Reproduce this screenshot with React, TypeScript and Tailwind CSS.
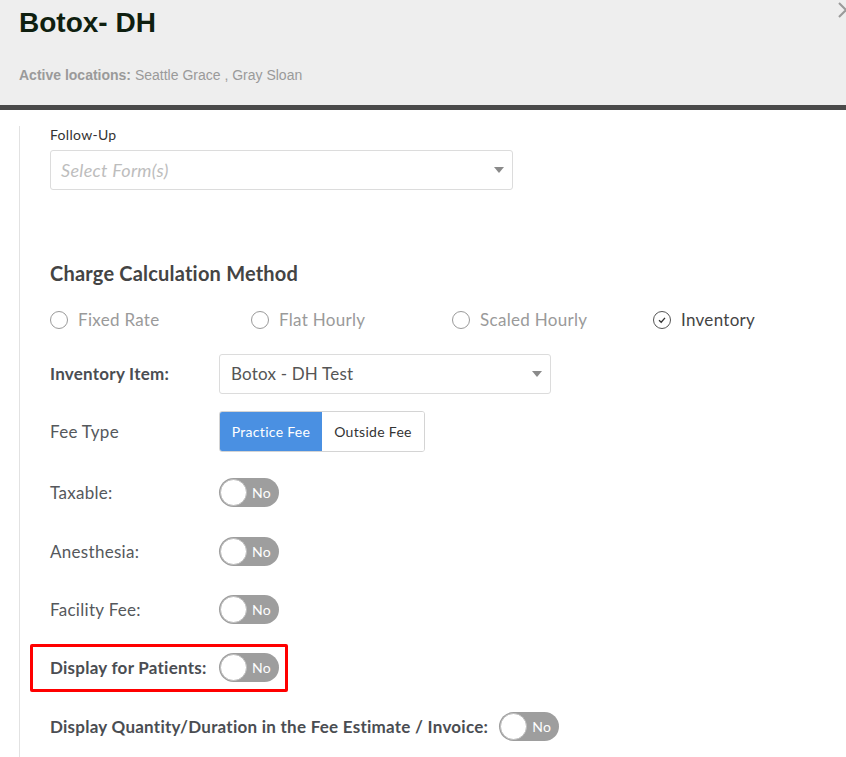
import React from "react";

// Small "No" switch used on every fee flag row
const Toggle = () => {
    return (
        <div className="relative flex items-center w-[60px] h-[29px] rounded-full bg-[#9e9e9e] shrink-0">
            <div className="absolute left-[1px] top-[1px] w-[27px] h-[27px] rounded-full bg-white border border-[#bdbdbd]"/>
            <span className="ml-auto mr-[8px] text-[14px] tracking-[0.3px] text-white">No</span>
        </div>
    );
};

const Caret = () => (
    <svg width="10" height="6" viewBox="0 0 10 6" className="shrink-0">
        <path d="M0 0 L10 0 L5 6 Z" fill="#8a8a8a"/>
    </svg>
);

type RadioProps = {
    label: string;
    checked?: boolean;
};

const Radio = ({label, checked}: RadioProps) => {
    return (
        <div className="flex items-center gap-[10px] w-[201px] shrink-0">
            <div
                className={`w-[18px] h-[18px] rounded-full border flex items-center justify-center ${checked ? "border-[#555]" : "border-[#9a9a9a]"}`}>
                {checked && (
                    <svg width="10" height="10" viewBox="0 0 10 10">
                        <path d="M2 5.2 L4.2 7.2 L8 2.8" stroke="#333" strokeWidth="1.3" fill="none"/>
                    </svg>
                )}
            </div>
            <span className={`text-[17px] tracking-[0.3px] ${checked ? "text-[#444]" : "text-[#9a9a9a]"}`}>{label}</span>
        </div>
    );
};

type FlagRowProps = {
    label: string;
    bold?: boolean;
    className?: string;
};

const FlagRow = ({label, bold, className}: FlagRowProps) => {
    return (
        <div className={`flex items-center ${className ?? ""}`}>
            <span
                className={`min-w-[158px] mr-[11px] text-[17px] ${bold ? "font-bold tracking-[0.25px] text-[#4a4d52]" : "tracking-[0.3px] text-[#55585c]"}`}>
                {label}
            </span>
            <Toggle/>
        </div>
    );
};

export default function App() {
    return (
        <div className="relative w-[846px] h-[757px] bg-white overflow-hidden font-['Lato',sans-serif]">
            {/* header */}
            <div className="h-[110px] bg-[#eeeeee] border-b-[5px] border-[#4a4a4a] px-[19px] pt-[5px]">
                <h1 className="text-[28px] leading-[36px] font-bold text-[#0f1f10] font-['Liberation_Sans',sans-serif]">
                    Botox- DH
                </h1>
                <p className="mt-[24px] text-[14px] text-[#9a9a9a] font-['Liberation_Sans',sans-serif]">
                    <span className="font-bold">Active locations:</span> Seattle Grace , Gray Sloan
                </p>
            </div>
            <svg width="16" height="16" viewBox="0 0 16 16" className="absolute left-[838px] top-[2px]">
                <path d="M1 1 L15 15 M15 1 L1 15" stroke="#9a9a9a" strokeWidth="2"/>
            </svg>

            {/* body */}
            <div className="ml-[19px] mt-[16px] h-[700px] border-l border-[#e2e2e2] pl-[30px]">
                <div className="text-[14px] leading-[16px] tracking-[0.3px] text-[#333] pt-[1px]">Follow-Up</div>
                <div
                    className="mt-[7px] w-[463px] h-[40px] border border-[#dcdcdc] rounded-[3px] flex items-center pl-[10px] pr-[8px]">
                    <span className="flex-1 italic text-[18px] tracking-[0.3px] text-[#bdbdbd]">Select Form(s)</span>
                    <Caret/>
                </div>

                <h2 className="mt-[71px] text-[20px] leading-[24px] tracking-[0.2px] font-bold text-[#444]">
                    Charge Calculation Method
                </h2>

                <div className="mt-[23px] flex items-center h-[24px]">
                    <Radio label="Fixed Rate"/>
                    <Radio label="Flat Hourly"/>
                    <Radio label="Scaled Hourly"/>
                    <Radio label="Inventory" checked/>
                </div>

                <div className="mt-[22px] flex items-center">
                    <span className="w-[169px] text-[17px] tracking-[0.25px] font-bold text-[#4a4d52]">Inventory Item:</span>
                    <div
                        className="w-[332px] h-[40px] border border-[#dcdcdc] rounded-[3px] flex items-center pl-[11px] pr-[8px]">
                        <span className="flex-1 text-[17px] tracking-[0.2px] text-[#555]">Botox - DH Test</span>
                        <Caret/>
                    </div>
                </div>

                <div className="mt-[17px] flex items-center">
                    <span className="w-[169px] text-[17px] tracking-[0.3px] text-[#55585c]">Fee Type</span>
                    <div
                        className="flex h-[41px] border border-[#d4d4d4] rounded-[3px] overflow-hidden text-[14px] tracking-[0.3px]">
                        <div className="w-[102px] bg-[#4a90e2] text-white flex items-center justify-center">Practice Fee</div>
                        <div className="w-[102px] bg-white text-[#333] flex items-center justify-center">Outside Fee</div>
                    </div>
                </div>

                <FlagRow label="Taxable:" className="mt-[26px]"/>
                <FlagRow label="Anesthesia:" className="mt-[30px]"/>
                <FlagRow label="Facility Fee:" className="mt-[29px]"/>

                <div className="relative mt-[29px]">
                    <FlagRow label="Display for Patients:" bold/>
                    <div
                        className="absolute left-[-20px] top-[-9px] w-[258px] h-[48px] border-[3px] border-[#ff0000] rounded-[2px]"/>
                </div>

                <FlagRow label="Display Quantity/Duration in the Fee Estimate / Invoice:" bold className="mt-[30px]"/>
            </div>
        </div>
    );
}
